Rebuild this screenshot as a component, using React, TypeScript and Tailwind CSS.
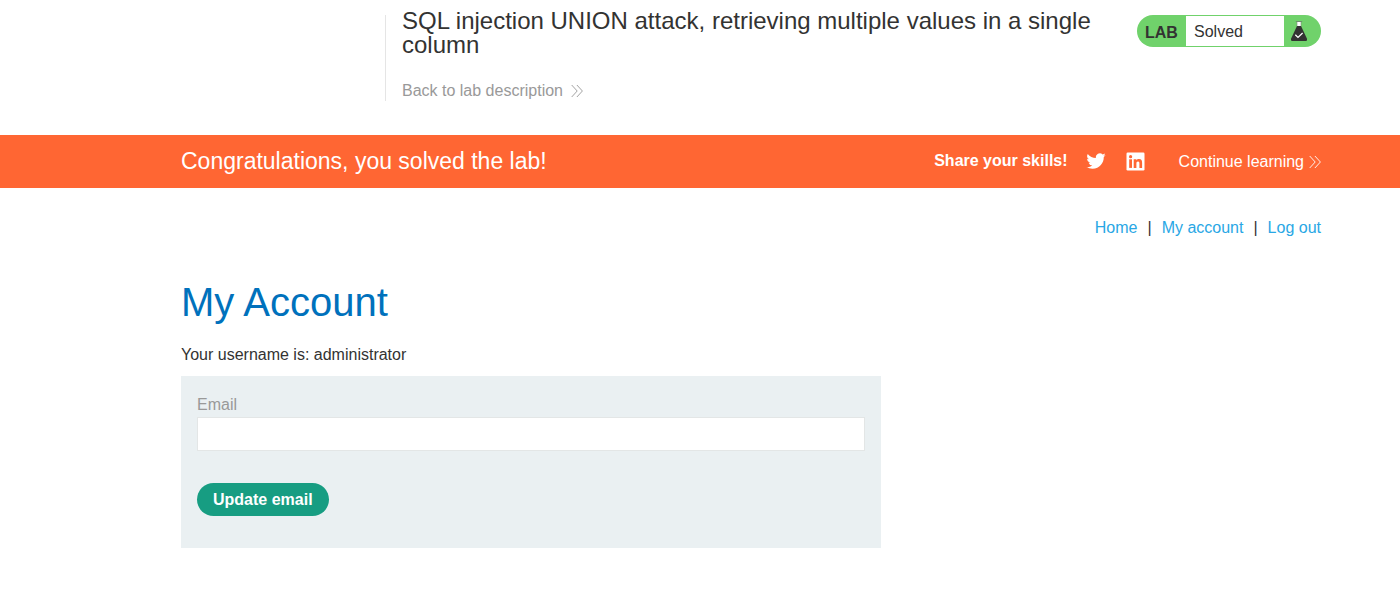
import React from "react";

function Chevrons({ className }: { className: string }) {
  return (
    <svg viewBox="0 0 12 14" className={`h-3.5 w-3 shrink-0 ${className}`} fill="none" stroke="currentColor" strokeWidth="0.9" aria-hidden="true">
      <path d="M0.7 1 L6.2 7 L0.7 13" />
      <path d="M5.9 1 L11.4 7 L5.9 13" />
    </svg>
  );
}

function Flask() {
  return (
    <svg viewBox="0 0 18 22" className="h-[22px] w-[18px]" aria-hidden="true">
      <path d="M7 2 h4 v5 h-4z" fill="#fff" />
      <path d="M5.800 1.500 h6.400" stroke="#6d8f6b" strokeWidth="1" />
      <path d="M7 2 v4.500 M11 2 v4.500" stroke="#7f8f7e" strokeWidth="0.6" />
      <path d="M7 6 h4 L17 18.800 Q17.600 21 15.800 21 H2.200 Q0.400 21 1 18.800 Z" fill="#333332" />
      <path d="M5.300 14.800 L8 17.400 L12.600 13" stroke="#fff" strokeWidth="1.300" fill="none" />
    </svg>
  );
}

function Twitter() {
  return (
    <svg viewBox="0 0 24 24" className="h-5 w-5" fill="currentColor" aria-hidden="true">
      <path d="M23.6 4.9a9.5 9.5 0 0 1-2.7.8 4.700 4.700 0 0 0 2.100-2.600 9.500 9.500 0 0 1-3 1.100 4.750 4.750 0 0 0-8.100 4.300A13.400 13.400 0 0 1 2.100 3.600a4.750 4.750 0 0 0 1.500 6.300 4.700 4.700 0 0 1-2.200-.6v.1a4.750 4.750 0 0 0 3.800 4.600 4.700 4.700 0 0 1-2.100.1 4.750 4.750 0 0 0 4.400 3.300A9.500 9.500 0 0 1 .5 19.300a13.400 13.400 0 0 0 7.300 2.100c8.700 0 13.500-7.200 13.500-13.500v-.6a9.600 9.600 0 0 0 2.300-2.400z" />
    </svg>
  );
}

function LinkedIn() {
  return (
    <svg viewBox="0 0 19 19" className="h-[19px] w-[19px]" aria-hidden="true">
      <rect x="0.5" y="0.5" width="18" height="18" rx="1.2" fill="#fff" />
      <g fill="#ff6633">
        <circle cx="4.600" cy="4.700" r="1.600" />
        <path d="M3.200 7.300h2.800v8.600H3.200z" />
        <path d="M7.700 7.300h2.700v1.200c.5-.9 1.400-1.400 2.600-1.400 2.500 0 3.100 1.600 3.100 3.900v4.900h-2.700v-4.400c0-1.200-.2-2.100-1.400-2.100s-1.600.9-1.600 2.100v4.400H7.700z" />
      </g>
    </svg>
  );
}

export default function App() {
  return (
    <div className="min-h-screen bg-white font-['Liberation_Sans',Arial,sans-serif] text-base text-[#333332]">
      <header className="flex items-start justify-end pt-[9px] pr-[79px] pb-[34px] pl-[181px]">
        <div className="mt-1.5 ml-51 w-px shrink-0 self-stretch bg-[#e5e5e5]" />
        <div className="flex min-w-0 flex-1 flex-col items-start pr-8 pl-4">
          <h2 className="text-2xl leading-6">SQL injection UNION attack, retrieving multiple values in a single column</h2>
          <a href="#description" className="mt-6 flex items-center leading-5 text-[#999999]">
            Back to lab description
            <Chevrons className="ml-2" />
          </a>
        </div>
        <div className="mt-1.5 flex h-8 w-46 shrink-0 overflow-hidden rounded-full bg-[#70d26b]">
          <span className="w-[49px] pt-0.5 pl-2 font-bold leading-8">LAB</span>
          <span className="my-px flex-1 bg-white pl-2 leading-8">Solved</span>
          <span className="flex w-[37px] items-center pl-1.5">
            <Flask />
          </span>
        </div>
      </header>

      <section className="flex h-[53px] items-center justify-between bg-[#ff6633] pr-[79px] pl-[181px] text-white">
        <h4 className="pb-0.5 text-[23px] leading-6">Congratulations, you solved the lab!</h4>
        <div className="flex items-center">
          <span className="pb-0.5 font-bold">Share your skills!</span>
          <a href="#twitter" aria-label="Share on Twitter" className="ml-[18px] pb-0.5">
            <Twitter />
          </a>
          <a href="#linkedin" aria-label="Share on LinkedIn" className="ml-5">
            <LinkedIn />
          </a>
          <a href="#continue" className="ml-[34px] flex items-center">
            Continue learning
            <Chevrons className="ml-[5px]" />
          </a>
        </div>
      </section>

      <main className="pr-[79px] pl-[181px]">
        <nav className="flex justify-end gap-2.5 pt-7">
          <a href="#home" className="text-[#29a7e5]">Home</a>
          <span>|</span>
          <a href="#account" className="text-[#29a7e5]">My account</a>
          <span>|</span>
          <a href="#logout" className="text-[#29a7e5]">Log out</a>
        </nav>
        <h1 className="mt-[38px] text-[40px] leading-12 text-[#0071bc]">My Account</h1>
        <p className="mt-[17px] mb-[9px]">Your username is: administrator</p>
        <form className="max-w-[700px] bg-[#eaf0f2] px-4 pt-[17px] pb-8" onSubmit={(e) => e.preventDefault()}>
          <label htmlFor="email" className="block text-[#999999]">Email</label>
          <input id="email" type="email" className="block h-[34px] w-full border border-[#e3e6e6] bg-white px-2 outline-none" />
          <button type="submit" className="mt-8 block h-[33px] rounded-full bg-[#179d82] px-4 font-bold text-white">
            Update email
          </button>
        </form>
      </main>
    </div>
  );
}
